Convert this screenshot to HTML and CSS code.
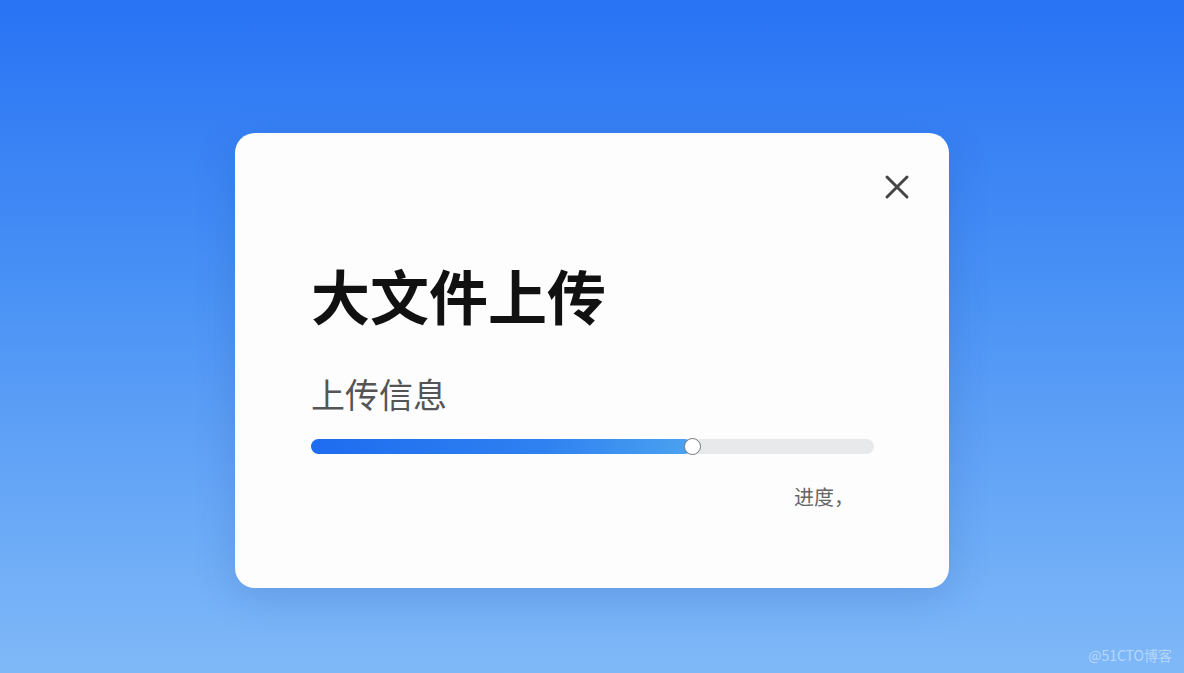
FILE: index.html
```html
<!DOCTYPE html>
<html lang="zh-CN">
<head>
    <meta charset="UTF-8">
    <meta name="viewport" content="width=device-width, initial-scale=1.0">
    <title>大文件上传</title>
    <link rel="stylesheet" href="styles.css">
</head>
<body>
    <div class="dialog">
        <button class="close-btn" aria-label="关闭">
            <svg width="26" height="26" viewBox="0 0 26 26">
                <path d="M3 3 L23 23 M23 3 L3 23" stroke="#454545" stroke-width="3" stroke-linecap="round" fill="none"/>
            </svg>
        </button>
        <h1 class="title">大文件上传</h1>
        <div class="info">上传信息</div>
        <div class="progress">
            <div class="progress-fill" style="width: 67.6%;">
                <span class="progress-thumb"></span>
            </div>
        </div>
        <div class="progress-text">进度，</div>
    </div>
    <div class="watermark">@51CTO博客</div>
</body>
</html>
```

FILE: styles.css
```css
html, body {
    margin: 0;
    height: 100%;
}
body {
    font-family: "Noto Sans CJK SC", "Noto Sans", sans-serif;
    background: linear-gradient(180deg, #2873f4 0%, #4b93f5 45%, #80b9f8 100%);
    display: flex;
    justify-content: center;
    align-items: flex-start;
    padding-top: 133px;
    box-sizing: border-box;
    overflow: hidden;
}
.dialog {
    position: relative;
    width: 714px;
    height: 455px;
    box-sizing: border-box;
    padding: 132px 75px 0 76px;
    background-color: #fdfdfd;
    border-radius: 20px;
    box-shadow: 0 10px 40px rgba(20, 60, 140, 0.18);
}
.close-btn {
    position: absolute;
    top: 41px;
    right: 39px;
    width: 26px;
    height: 26px;
    padding: 0;
    border: none;
    background: none;
    cursor: pointer;
}
.close-btn svg {
    display: block;
}
.title {
    margin: 0;
    font-size: 59px;
    line-height: 1;
    font-weight: 700;
    color: #111;
    letter-spacing: 0;
}
.info {
    margin-top: 53px;
    font-size: 34px;
    line-height: 1;
    color: #555;
}
.progress {
    margin-top: 28px;
    height: 15px;
    border-radius: 8px;
    background-color: #e8e9eb;
}
.progress-fill {
    position: relative;
    height: 100%;
    border-radius: 8px;
    background: linear-gradient(90deg, #1e6cf0 0%, #2f80f0 60%, #4ba2f0 100%);
}
.progress-thumb {
    position: absolute;
    right: -9px;
    top: -1px;
    width: 15px;
    height: 15px;
    border-radius: 50%;
    background-color: #fff;
    border: 1.5px solid #777;
}
.progress-text {
    margin-top: 33px;
    padding-right: 20px;
    text-align: right;
    font-size: 20px;
    line-height: 1;
    color: #666;
}
.watermark {
    position: absolute;
    right: 12px;
    bottom: 8px;
    font-size: 14px;
    color: rgba(255, 255, 255, 0.45);
}
```
